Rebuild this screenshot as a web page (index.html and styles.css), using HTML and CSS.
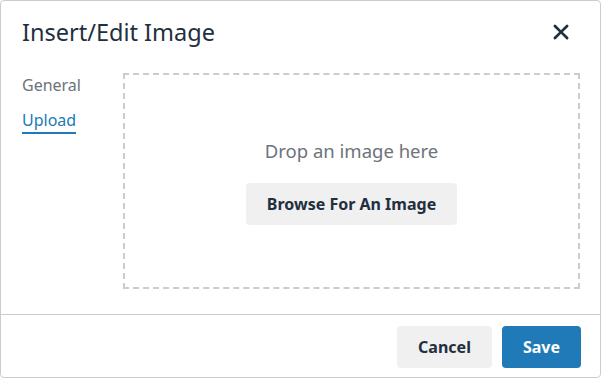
FILE: index.html
```html
<!DOCTYPE html>
<html lang="en">
<head>
    <meta charset="UTF-8">
    <meta name="viewport" content="width=device-width, initial-scale=1.0">
    <title>Insert/Edit Image</title>
    <link rel="stylesheet" href="styles.css">
</head>
<body>
    <div class="dialog">
        <div class="dialog-header">
            <h1 class="dialog-title">Insert/Edit Image</h1>
            <button class="close-btn" type="button" aria-label="Close">
                <svg width="32" height="32" viewBox="0 0 24 24">
                    <path d="M17.3 8.2L13.4 12l3.9 3.8a1 1 0 01-1.5 1.5L12 13.4l-3.8 3.9a1 1 0 01-1.5-1.5l3.9-3.8-3.9-3.8a1 1 0 011.5-1.5l3.8 3.9 3.8-3.9a1 1 0 011.5 1.5z"/>
                </svg>
            </button>
        </div>

        <div class="dialog-body">
            <div class="tabs">
                <div class="tab">General</div>
                <div class="tab active">Upload</div>
            </div>
            <div class="dropzone">
                <p class="drop-text">Drop an image here</p>
                <button class="btn btn-secondary" type="button">Browse For An Image</button>
            </div>
        </div>

        <div class="dialog-footer">
            <button class="btn btn-secondary" type="button">Cancel</button>
            <button class="btn btn-primary" type="button">Save</button>
        </div>
    </div>
</body>
</html>
```

FILE: styles.css
```css
*{
    padding: 0px;
    margin: 0px;
    box-sizing: border-box;
}
body{
    font-family: "Noto Sans", "DejaVu Sans", sans-serif;
    color: #222f3e;
    background: #fff;
}
.dialog{
    width: 601px;
    height: 378px;
    border: 1px solid #cccccc;
    border-radius: 4px;
    display: flex;
    flex-direction: column;
}
.dialog-header{
    display: flex;
    align-items: center;
    justify-content: space-between;
    padding: 0px 23px 0px 21px;
    height: 56px;
    padding-top: 6px;
}
.dialog-title{
    font-size: 23.5px;
    font-weight: 400;
    line-height: 32px;
}
.close-btn{
    border: none;
    background: none;
    width: 32px;
    height: 32px;
    fill: #222f3e;
}
.dialog-body{
    flex: 1;
    display: flex;
    padding: 16px 20px 25px 21px;
}
.tabs{
    width: 101px;
    display: flex;
    flex-direction: column;
}
.tab{
    font-size: 16px;
    line-height: 24px;
    color: #6d737a;
    align-self: flex-start;
    margin-bottom: 11px;
}
.tab.active{
    color: #207ab7;
    border-bottom: 2px solid #207ab7;
}
.dropzone{
    flex: 1;
    border: 2px dashed #cccccc;
    display: flex;
    flex-direction: column;
    align-items: center;
    justify-content: center;
}
.drop-text{
    font-size: 18.5px;
    line-height: 24px;
    color: #6d737a;
    margin-bottom: 20px;
    margin-top: 2px;
}
.btn{
    font-family: inherit;
    font-size: 16px;
    font-weight: 700;
    height: 42px;
    padding: 0px 21px;
    border-radius: 4px;
    border: none;
}
.btn-secondary{
    background-color: #f0f0f0;
    color: #222f3e;
}
.btn-primary{
    background-color: #207ab7;
    color: #ffffff;
}
.dialog-footer{
    border-top: 1px solid #cccccc;
    display: flex;
    justify-content: flex-end;
    gap: 10px;
    padding: 11px 19px 9px 19px;
}
```
